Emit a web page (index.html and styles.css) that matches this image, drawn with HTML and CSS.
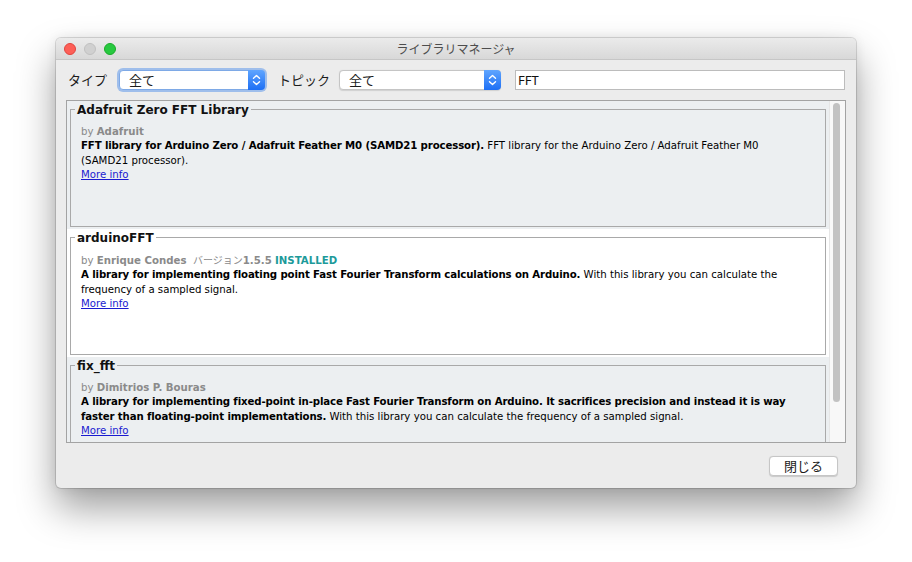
FILE: index.html
```html
<!DOCTYPE html>
<html lang="ja">
<head>
<meta charset="utf-8">
<title>ライブラリマネージャ</title>
<link rel="stylesheet" href="styles.css">
</head>
<body>
<div class="window">
  <div class="titlebar">
    <div class="lights">
      <span class="light red"></span>
      <span class="light off"></span>
      <span class="light green"></span>
    </div>
    <div class="title">ライブラリマネージャ</div>
    <div></div>
  </div>

  <div class="toolbar">
    <span class="label label-type">タイプ</span>
    <div class="select select-type focused">
      <span class="select-text">全て</span>
      <span class="stepper">
        <svg width="17" height="20" viewBox="0 0 17 20"><path d="M5.5 8.2 L8.5 5.4 L11.5 8.2 M5.5 11.8 L8.5 14.6 L11.5 11.8" fill="none" stroke="#fff" stroke-width="1.4" stroke-linecap="round" stroke-linejoin="round"/></svg>
      </span>
    </div>
    <span class="label label-topic">トピック</span>
    <div class="select select-topic">
      <span class="select-text">全て</span>
      <span class="stepper">
        <svg width="17" height="20" viewBox="0 0 17 20"><path d="M5.5 8.2 L8.5 5.4 L11.5 8.2 M5.5 11.8 L8.5 14.6 L11.5 11.8" fill="none" stroke="#fff" stroke-width="1.4" stroke-linecap="round" stroke-linejoin="round"/></svg>
      </span>
    </div>
    <div class="search">FFT</div>
  </div>

  <div class="list">
    <div class="items">
      <div class="item alt">
        <fieldset class="box">
          <legend class="name">Adafruit Zero FFT Library</legend>
          <div class="body">
            <div class="meta">by <b>Adafruit</b></div>
            <div class="desc"><b>FFT library for Arduino Zero / Adafruit Feather M0 (SAMD21 processor).</b> FFT library for the Arduino Zero / Adafruit Feather M0 (SAMD21 processor).</div>
            <a class="more" href="#">More info</a>
          </div>
        </fieldset>
      </div>
      <div class="item">
        <fieldset class="box">
          <legend class="name">arduinoFFT</legend>
          <div class="body">
            <div class="meta">by <b>Enrique Condes</b>&nbsp; <span class="jp">バージョン</span><b>1.5.5</b> <b class="installed">INSTALLED</b></div>
            <div class="desc"><b>A library for implementing floating point Fast Fourier Transform calculations on Arduino.</b> With this library you can calculate the frequency of a sampled signal.</div>
            <a class="more" href="#">More info</a>
          </div>
        </fieldset>
      </div>
      <div class="item alt">
        <fieldset class="box">
          <legend class="name">fix_fft</legend>
          <div class="body">
            <div class="meta">by <b>Dimitrios P. Bouras</b></div>
            <div class="desc"><b>A library for implementing fixed-point in-place Fast Fourier Transform on Arduino. It sacrifices precision and instead it is way faster than floating-point implementations.</b> With this library you can calculate the frequency of a sampled signal.</div>
            <a class="more" href="#">More info</a>
          </div>
        </fieldset>
      </div>
    </div>
    <div class="scrollbar"><div class="thumb"></div></div>
  </div>

  <div class="footer">
    <button class="btn" type="button">閉じる</button>
  </div>
</div>
</body>
</html>
```

FILE: styles.css
```css
html, body {
  margin: 0;
  padding: 0;
}
body {
  width: 912px;
  height: 562px;
  background: #ffffff;
  overflow: hidden;
  font-family: "DejaVu Sans", "Noto Sans CJK JP", sans-serif;
}

.window {
  width: 800px;
  height: 450px;
  margin: 38px 0 0 56px;
  background: #ececec;
  border-radius: 5px;
  box-shadow: 0 0 0 1px rgba(0, 0, 0, 0.13), 0 20px 38px rgba(0, 0, 0, 0.38), 0 0 12px rgba(0, 0, 0, 0.08);
  overflow: hidden;
  display: flex;
  flex-direction: column;
}

/* title bar */
.titlebar {
  height: 22px;
  box-sizing: border-box;
  border-bottom: 1px solid #c6c6c6;
  background: linear-gradient(#ebebeb, #d8d8d8);
  display: grid;
  grid-template-columns: 1fr auto 1fr;
  align-items: center;
}
.lights {
  display: flex;
  gap: 8px;
  padding-left: 8px;
}
.light {
  width: 12px;
  height: 12px;
  box-sizing: border-box;
  border-radius: 50%;
}
.light.red { background: #fd5f57; border: 0.5px solid #e0443e; }
.light.off { background: #d0d0d0; border: 0.5px solid #c0c0c0; }
.light.green { background: #28c940; border: 0.5px solid #1aab29; }
.title {
  font-family: "Noto Sans CJK JP", sans-serif;
  font-size: 12px;
  color: #4d4d4d;
  line-height: 21px;
}

/* toolbar */
.toolbar {
  display: flex;
  align-items: center;
  height: 21px;
  margin-top: 9px;
  padding: 0 11px 0 12px;
  font-family: "Noto Sans CJK JP", sans-serif;
  font-size: 13px;
  color: #1b1b1b;
}
.label { line-height: 19px; }
.label-type { margin-right: 12px; }
.label-topic { margin-right: 9px; }
.select {
  height: 20px;
  box-sizing: border-box;
  background: #fff;
  border: 1px solid #c5c5c5;
  border-radius: 4px;
  display: flex;
  align-items: center;
  justify-content: space-between;
  box-shadow: 0 0.5px 1px rgba(0, 0, 0, 0.12);
}
.select-type {
  width: 146px;
  margin-right: 13px;
}
.select.focused {
  border-color: #7ea9e6;
  box-shadow: 0 0 0 2px rgba(118, 166, 235, 0.65);
}
.select-topic {
  width: 162px;
  margin-right: 14px;
}
.select-text {
  padding-left: 9px;
  line-height: 17px;
  font-size: 13px;
}
.stepper {
  width: 17px;
  height: 20px;
  margin: -1px -1px -1px 0;
  border-radius: 0 4px 4px 0;
  background: linear-gradient(#5fa5ff, #1d6ff5);
  display: flex;
}
.search {
  flex: 1;
  height: 20px;
  box-sizing: border-box;
  background: #fff;
  border: 1px solid #bcbcbc;
  padding-left: 2px;
  font-family: "Noto Sans", "DejaVu Sans", sans-serif;
  font-size: 13px;
  line-height: 18px;
  color: #111;
}

/* list */
.list {
  margin: 10px 10px 0 10px;
  height: 343px;
  box-sizing: border-box;
  border: 1px solid #a3a3a3;
  background: #fff;
  display: flex;
}
.items {
  flex: 1;
  overflow: hidden;
}
.item {
  height: 128px;
  box-sizing: border-box;
  padding: 0 3px 2px 3px;
  background: #ffffff;
}
.item.alt {
  background: #eceff1;
}
.box {
  margin: 0;
  height: 126px;
  box-sizing: border-box;
  border: 1px solid #a9a9a9;
  padding: 0 10px 0 4px;
  min-width: 0;
}
.name {
  padding: 2px 2px 0;
  font-family: "DejaVu Sans", sans-serif;
  font-weight: bold;
  font-size: 12px;
  line-height: 14px;
  color: #111;
}
.body {
  margin-top: 8px;
  padding: 0 10px 0 6px;
  font-size: 10.2px;
  line-height: 14.4px;
  color: #000;
}
.desc b {
  letter-spacing: -0.13px;
}
.meta {
  color: #8a8a8a;
}
.meta .jp {
  font-family: "Noto Sans CJK JP", sans-serif;
  font-size: 10px;
}
.installed {
  color: #1c9a9a;
}
.more {
  color: #1a1ad0;
  text-decoration: underline;
}

.scrollbar {
  width: 16px;
  box-sizing: border-box;
  border-left: 1px solid #e6e6e6;
  background: #f8f8f8;
  padding: 2px 0 0 3px;
}
.thumb {
  width: 7px;
  height: 299px;
  border-radius: 4px;
  background: #c2c2c2;
}

/* footer */
.footer {
  display: flex;
  justify-content: flex-end;
  padding: 13px 18px 0 0;
}
.btn {
  width: 69px;
  height: 20px;
  padding: 0;
  background: #fff;
  border: 1px solid #c6c6c6;
  border-radius: 4px;
  box-shadow: 0 0.5px 1px rgba(0, 0, 0, 0.15);
  font-family: "Noto Sans CJK JP", sans-serif;
  font-size: 13px;
  line-height: 18px;
  color: #1b1b1b;
}
```
